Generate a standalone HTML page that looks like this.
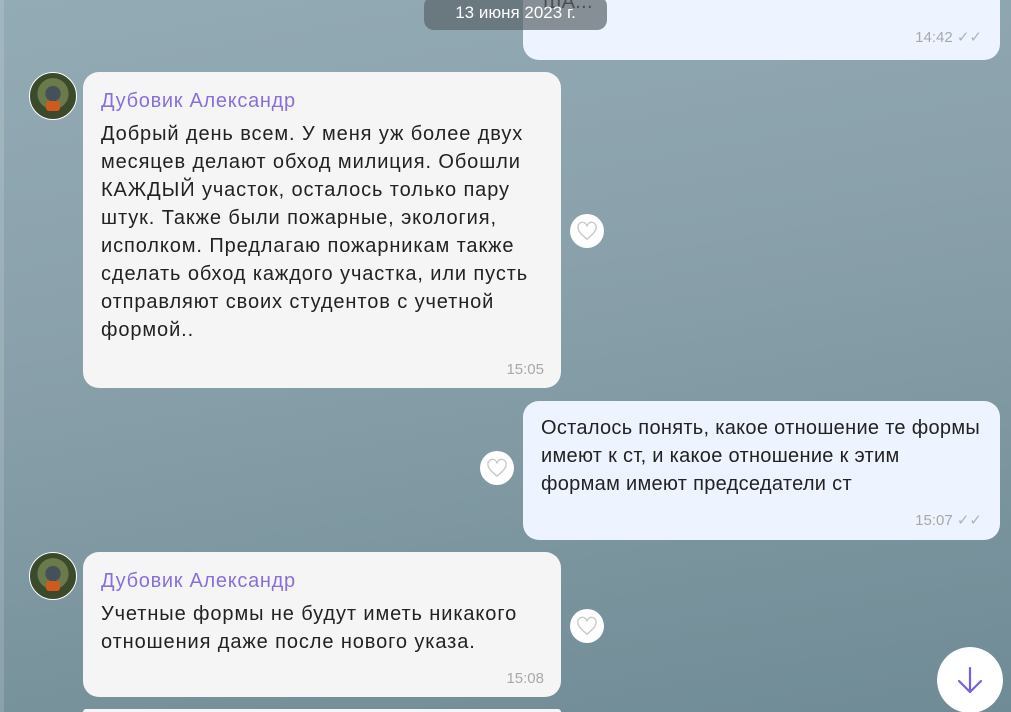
<!DOCTYPE html><html><head><meta charset="utf-8"><style>
html,body{margin:0;width:1011px;height:712px;overflow:hidden}
body{position:relative;font-family:"Liberation Sans",sans-serif;background:linear-gradient(170deg,#93abb5 0%,#8aa1ab 40%,#6f8b95 100%);}
.b{position:absolute;border-radius:16px;color:#222;font-size:20px;line-height:28px;letter-spacing:0.3px}
.in{background:#f5f5f5;left:83px;width:478px}
.in .t{letter-spacing:0.9px}
.out{background:#eef4ff;left:523px;width:477px}
.n{color:#8a6fdc;font-size:20px;position:absolute;left:18px;letter-spacing:0.7px}
.t{position:absolute;left:18px;white-space:nowrap}
.tm{position:absolute;right:17px;color:#a8a8a8;font-size:15px;letter-spacing:0}
.av{position:absolute;left:29px;width:46px;height:46px;border-radius:50%;border:1.5px solid #fff;background:radial-gradient(circle at 50% 45%,#44505a 0 22%,#6a7a4a 23% 45%,#3a4a2a 46%);}
.av:after{content:"";position:absolute;left:16px;top:28px;width:14px;height:10px;background:#d05a1a;border-radius:3px}
.h{position:absolute;width:34px;height:34px;border-radius:50%;background:#fff;display:flex;align-items:center;justify-content:center}
</style></head><body>
<div style="position:absolute;left:0;top:0;width:4px;height:712px;background:rgba(255,255,255,.15)"></div>
<div class="b out" style="top:-20px;height:80px"><div class="t" style="top:8px;left:20px">ША...</div><div class="tm" style="top:44px;right:18px">14:42 <span style="color:#b0b0c0">✓✓</span></div></div>
<div style="position:absolute;left:424px;top:-4px;width:183px;height:34px;border-radius:10px;background:rgba(90,100,105,.7);color:#fff;font-size:17px;text-align:center;line-height:34px">13 июня 2023 г.</div>
<div class="av" style="top:72px"></div>
<div class="b in" style="top:72px;height:316px"><div class="n" style="top:15px">Дубовик Александр</div>
<div class="t" style="top:48px">Добрый день всем. У меня уж более двух<br>месяцев делают обход милиция. Обошли<br>КАЖДЫЙ участок, осталось только пару<br>штук. Также были пожарные, экология,<br>исполком. Предлагаю пожарникам также<br>сделать обход каждого участка, или пусть<br>отправляют своих студентов с учетной<br>формой..</div><div class="tm" style="top:284px">15:05</div></div>
<div class="h" style="left:570px;top:214px"><svg width="22" height="20" viewBox="0 0 24 22"><path d="M12 20C5 14 2 11 2 7a5 5 0 0 1 10-1 5 5 0 0 1 10 1c0 4-3 7-10 13z" fill="none" stroke="#c8c8c8" stroke-width="1.5"/></svg></div>
<div class="b out" style="top:401px;height:139px"><div class="t" style="top:13px">Осталось понять, какое отношение те формы<br>имеют к ст, и какое отношение к этим<br>формам имеют председатели ст</div><div class="tm" style="top:106px;right:18px">15:07 <span style="color:#b0b0c0">✓✓</span></div></div>
<div class="h" style="left:480px;top:451px"><svg width="22" height="20" viewBox="0 0 24 22"><path d="M12 20C5 14 2 11 2 7a5 5 0 0 1 10-1 5 5 0 0 1 10 1c0 4-3 7-10 13z" fill="none" stroke="#c8c8c8" stroke-width="1.5"/></svg></div>
<div class="av" style="top:552px"></div>
<div class="b in" style="top:552px;height:145px"><div class="n" style="top:15px">Дубовик Александр</div>
<div class="t" style="top:48px">Учетные формы не будут иметь никакого<br>отношения даже после нового указа.</div><div class="tm" style="top:113px">15:08</div></div>
<div class="h" style="left:570px;top:609px"><svg width="22" height="20" viewBox="0 0 24 22"><path d="M12 20C5 14 2 11 2 7a5 5 0 0 1 10-1 5 5 0 0 1 10 1c0 4-3 7-10 13z" fill="none" stroke="#c8c8c8" stroke-width="1.5"/></svg></div>
<div style="position:absolute;left:83px;top:709px;width:478px;height:3px;background:#f5f5f5;border-radius:3px 3px 0 0"></div>
<div style="position:absolute;left:937px;top:647px;width:66px;height:65px;border-radius:33px 33px 0 0;overflow:hidden"><div style="width:66px;height:66px;border-radius:50%;background:#fff;display:flex;align-items:center;justify-content:center"><svg width="30" height="30" viewBox="0 0 30 30"><path d="M15 3V27M4 16L15 27L26 16" fill="none" stroke="#7b5ee0" stroke-width="2.2" stroke-linecap="round" stroke-linejoin="round"/></svg></div></div>
</body></html>
